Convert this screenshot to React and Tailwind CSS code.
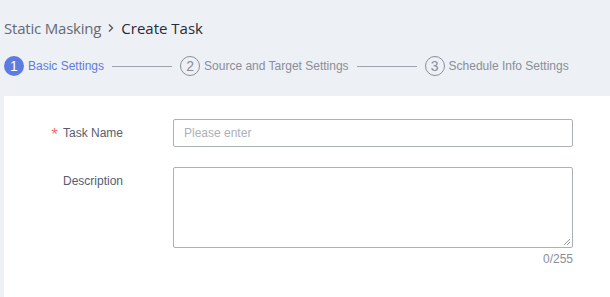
export default function App() {
  const sans = { fontFamily: '"Liberation Sans", Arial, sans-serif' };
  return (
    <div className="w-[610px] h-[297px] bg-[#edf0f5] overflow-hidden flex flex-col" style={sans}>
      <div className="pl-[4px] pt-[16px] h-[24px] box-content flex items-center text-[15px] leading-[20px]" style={{ fontFamily: '"Open Sans", "Noto Sans", sans-serif' }}>
        <span className="text-[#666a75] tracking-[-0.2px]">Static Masking</span>
        <svg width="14" height="14" viewBox="0 0 14 14" className="mx-[3px]">
          <path d="M5 3.5 L8.5 7 L5 10.5" fill="none" stroke="#555" strokeWidth="1.3" />
        </svg>
        <span className="text-[#252b3a]">Create Task</span>
      </div>
      <div className="pl-[4px] mt-[16px] h-[20px] flex items-center text-[12px]">
        <span className="w-[20px] h-[20px] rounded-full bg-[#5e7ce0] text-white flex items-center justify-center text-[14px]">1</span>
        <span className="ml-[4px] text-[#5e7ce0]">Basic Settings</span>
        <span className="ml-[8px] w-[60px] h-px bg-[#a0a3ab]"></span>
        <span className="ml-[8px] w-[20px] h-[20px] rounded-full border border-[#8a8e99] text-[#8a8e99] flex items-center justify-center text-[14px]">2</span>
        <span className="ml-[4px] text-[#8a8e99]">Source and Target Settings</span>
        <span className="ml-[8px] w-[60px] h-px bg-[#a0a3ab]"></span>
        <span className="ml-[8px] w-[20px] h-[20px] rounded-full border border-[#8a8e99] text-[#8a8e99] flex items-center justify-center text-[14px]">3</span>
        <span className="ml-[4px] text-[#8a8e99]">Schedule Info Settings</span>
      </div>
      <div className="ml-[4px] mt-[20px] flex-1 bg-white pt-[23px]">
        <div className="flex items-center h-[28px]">
          <div className="w-[124px] pr-[5px] text-right text-[12px] text-[#575d6c] flex items-center justify-end">
            <span className="text-[#f66f6a] mr-[5px] text-[17px] leading-[12px] pt-[4px]">*</span>Task Name
          </div>
          <div className="ml-[45px] w-[400px] h-[28px] border border-[#adb0b8] rounded-[2px] flex items-center px-[10px] text-[12px] text-[#adb0b8]">
            Please enter
          </div>
        </div>
        <div className="flex mt-[20px]">
          <div className="w-[124px] pr-[5px] text-right text-[12px] text-[#575d6c] pt-[5px]">Description</div>
          <div className="ml-[45px] w-[400px] flex flex-col">
            <div className="relative h-[81px] border border-[#adb0b8] rounded-[2px]">
              <svg width="8" height="8" viewBox="0 0 8 8" className="absolute right-[1px] bottom-[1px]">
                <path d="M7 1 L1 7 M7 4 L4 7" stroke="#999" strokeWidth="1" />
              </svg>
            </div>
            <div className="text-right text-[12px] text-[#8a8e99] mt-[2px] leading-[18px]">0/255</div>
          </div>
        </div>
      </div>
    </div>
  );
}
